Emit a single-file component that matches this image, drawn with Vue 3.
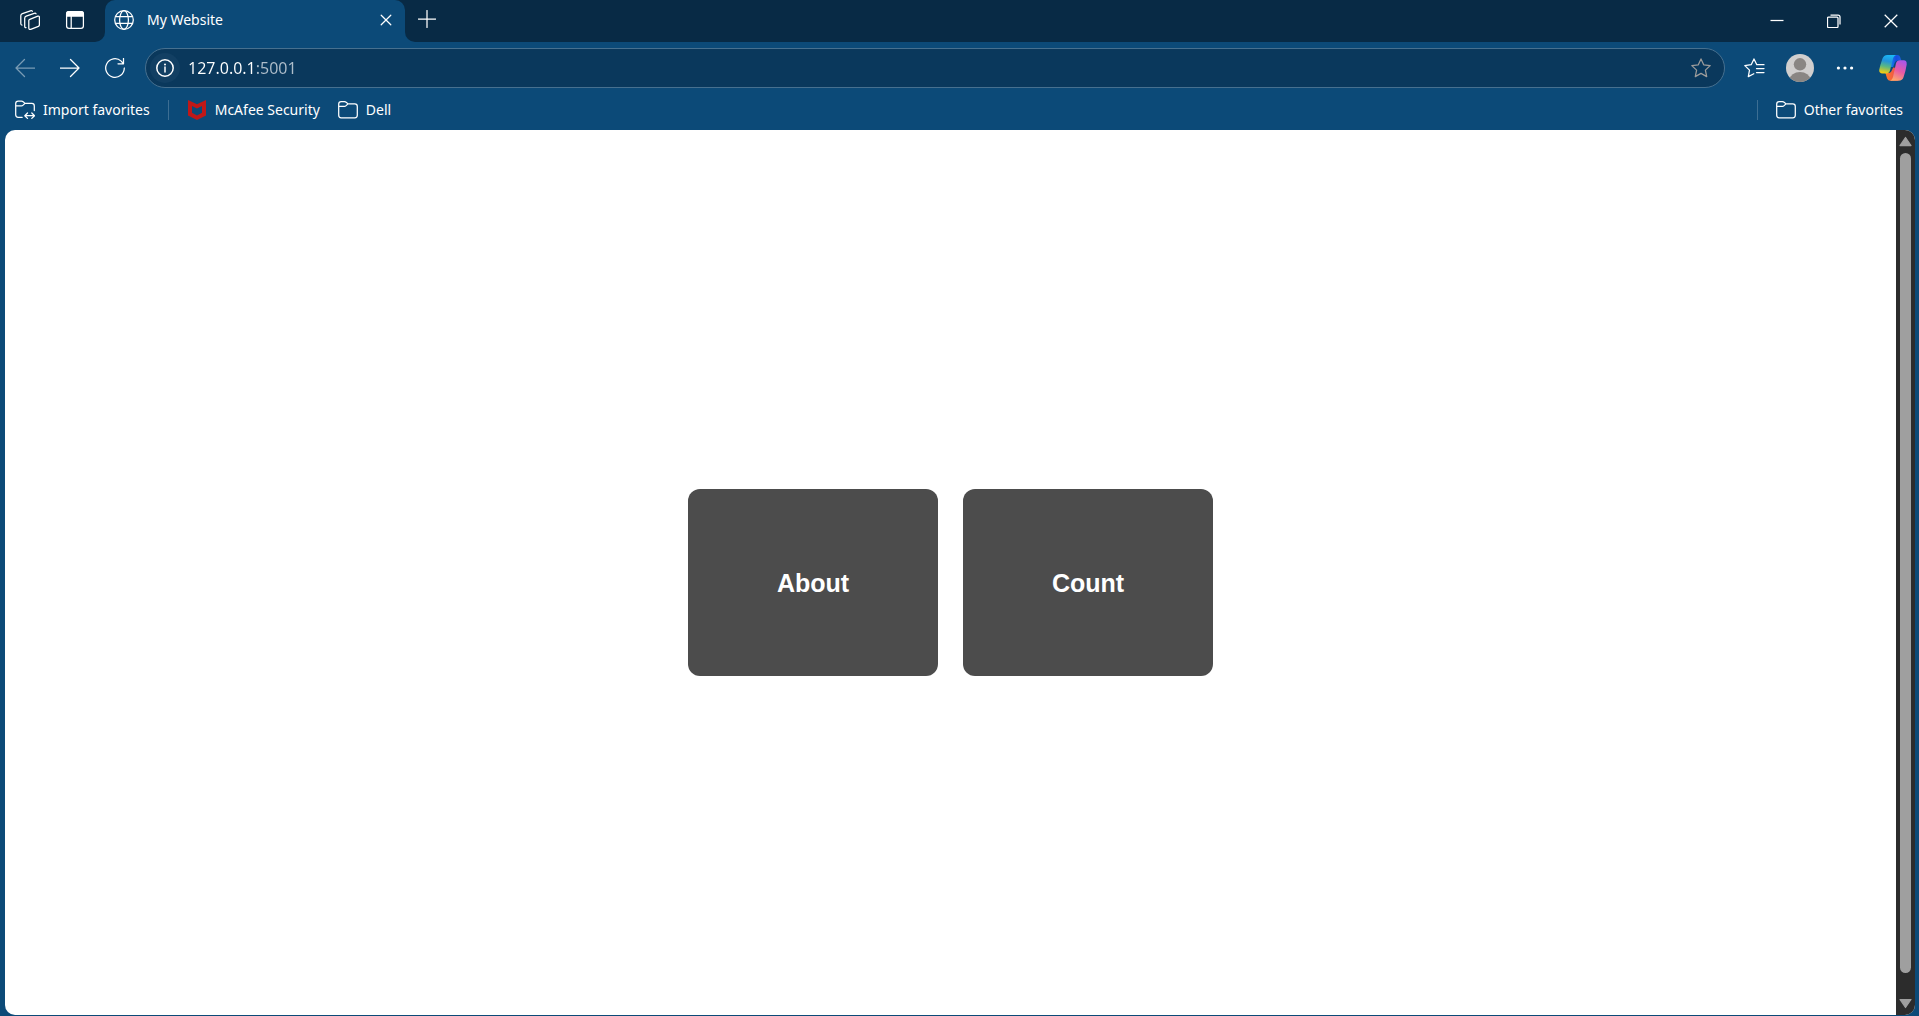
<script setup>
import { ref } from 'vue'

const address = ref('127.0.0.1:5001')
const cards = ['About', 'Count']
</script>

<template>
  <div class="browser">
    <header class="strip">
      <div class="strip-left">
        <button class="tool" aria-label="Workspaces">
          <svg width="20" height="20" viewBox="0 0 20 20">
            <path d="M9.8 9.3 17.8 6.2Q19.4 5.8 19.4 7.2V14.8Q19.4 15.9 18.4 16.4L10.7 19.3Q8.8 19.8 8.8 18V10.6Q8.8 9.7 9.8 9.3Z" />
            <path d="M16 3.8Q15.6 2.8 14.2 3.3L6.2 6.2Q4.7 6.8 4.7 8.3V16.2Q4.7 17.7 6 17.6" />
            <path d="M12.4 1.3Q11.8.3 10.4.8L2.4 3.7Q.8 4.3.8 5.8V13.6Q.8 15.1 2 15.1" />
          </svg>
        </button>
        <button class="tool" aria-label="Tab actions">
          <svg width="20" height="20" viewBox="0 0 20 20">
            <rect x="1.6" y="1.6" width="16.8" height="16.8" rx="2.4" />
            <path d="M1.6 6V4Q1.6 1.6 4 1.6H16Q18.4 1.6 18.4 4V6Z" fill="#fff" />
            <path d="M6.2 6V18" />
          </svg>
        </button>
      </div>
      <div class="tab-slot">
        <div class="tab">
          <svg width="20" height="20" viewBox="0 0 20 20">
            <circle cx="10" cy="10" r="9.3" />
            <ellipse cx="10" cy="10" rx="4.4" ry="9.3" />
            <path d="M1.6 6.7H18.4M1.6 13.3H18.4" />
          </svg>
          <span class="tab-title">My Website</span>
          <button class="tab-close" aria-label="Close tab">
            <svg width="12" height="12" viewBox="0 0 12 12"><path d="M1.2 1.2 10.8 10.8M10.8 1.2 1.2 10.8" /></svg>
          </button>
        </div>
      </div>
      <div class="strip-right">
        <button class="new-tab" aria-label="New tab">
          <svg width="18" height="18" viewBox="0 0 18 18"><path d="M9 .5V17.5M.5 9H17.5" /></svg>
        </button>
        <div class="window-controls">
          <button aria-label="Minimize">
            <svg width="14" height="14" viewBox="0 0 14 14"><path d="M.5 6.5H13.5" /></svg>
          </button>
          <button aria-label="Restore">
            <svg width="14" height="14" viewBox="0 0 14 14">
              <rect x=".5" y="3" width="10.5" height="10.5" rx="1" />
              <path d="M3.5 1H11Q13 1 13 3V10.5" />
            </svg>
          </button>
          <button aria-label="Close">
            <svg width="14" height="14" viewBox="0 0 14 14"><path d="M.7.7 13.3 13.3M13.3.7.7 13.3" /></svg>
          </button>
        </div>
      </div>
    </header>

    <nav class="toolbar">
      <button class="tool dim" aria-label="Back">
        <svg width="20" height="20" viewBox="0 0 20 20"><path d="M20 10H1M9.5 1.5 1 10 9.5 18.5" /></svg>
      </button>
      <button class="tool" aria-label="Forward">
        <svg width="20" height="20" viewBox="0 0 20 20"><path d="M0 10H19M10.5 1.5 19 10 10.5 18.5" /></svg>
      </button>
      <button class="tool" aria-label="Refresh">
        <svg width="20" height="20" viewBox="0 0 20 20"><path d="M19.3 10A9.3 9.3 0 1 1 16.2 3.1L18.3 5.6M18.5.4V5.8H13" /></svg>
      </button>
      <div class="address">
        <button class="info" aria-label="View site information">
          <svg width="18" height="18" viewBox="0 0 18 18">
            <circle cx="9" cy="9" r="8.2" stroke-width="1.5" />
            <path d="M9 8V13" stroke-width="1.5" />
            <circle cx="9" cy="5.5" r="1" fill="#fff" stroke="none" />
          </svg>
        </button>
        <input v-model="address" class="url" type="text" aria-label="Address" spellcheck="false" />
        <button class="star" aria-label="Add to favorites">
          <svg width="20" height="20" viewBox="0 0 20 20">
            <path d="M10 .9 12.7 6.8 19.2 7.6 14.4 12.1 15.7 18.6 10 15.4 4.3 18.6 5.6 12.1.8 7.6 7.3 6.8Z" />
          </svg>
        </button>
      </div>
      <button class="tool" aria-label="Favorites">
        <svg width="21" height="20" viewBox="0 0 21 20">
          <path d="M20 6.7H12.8L10 .9 7.2 6.7.8 7.6 5.5 12.1 4.3 18.6 9.8 15.7M12.5 10.5H20M12.5 14.5H20" />
        </svg>
      </button>
      <button class="tool" aria-label="Profile">
        <svg width="28" height="28" viewBox="0 0 28 28">
          <defs><clipPath id="avatar"><circle cx="14" cy="14" r="14" /></clipPath></defs>
          <g clip-path="url(#avatar)" stroke="none">
            <rect width="28" height="28" fill="#d1cfce" />
            <circle cx="14" cy="10.3" r="6.2" fill="#8a8683" />
            <ellipse cx="14" cy="25.3" rx="10.2" ry="7.3" fill="#8a8683" />
          </g>
        </svg>
      </button>
      <button class="tool" aria-label="Settings and more">
        <svg width="18" height="18" viewBox="0 0 18 18">
          <g fill="#fff" stroke="none"><circle cx="2.4" cy="9" r="1.6" /><circle cx="9" cy="9" r="1.6" /><circle cx="15.6" cy="9" r="1.6" /></g>
        </svg>
      </button>
      <button class="tool copilot" aria-label="Copilot">
        <svg width="28" height="28" viewBox="0 0 28 28">
          <defs>
            <linearGradient id="cool" x1=".6" y1="0" x2=".4" y2="1">
              <stop offset="0" stop-color="#19b9f5" /><stop offset=".35" stop-color="#2393db" />
              <stop offset=".65" stop-color="#5bb882" /><stop offset="1" stop-color="#f3cc12" />
            </linearGradient>
            <linearGradient id="warm" x1=".7" y1="0" x2=".3" y2="1">
              <stop offset="0" stop-color="#a957e8" /><stop offset=".5" stop-color="#e85aa5" />
              <stop offset="1" stop-color="#ffab68" />
            </linearGradient>
            <linearGradient id="blue"><stop offset="0" stop-color="#12a2ef" /><stop offset=".6" stop-color="#164be0" /><stop offset="1" stop-color="#1d62df" /></linearGradient>
            <linearGradient id="flame"><stop offset="0" stop-color="#ff7b27" /><stop offset="1" stop-color="#e94b51" /></linearGradient>
          </defs>
          <g stroke="none">
            <path d="M9 1H18.6Q20.4 1 21.1 2.9L22.4 6.4H19.4Q16.4 6.4 15.4 9.4L14.2 13H10Z" fill="url(#blue)" />
            <path d="M6.4 19H9.4Q12 19 13 16L14.2 13.5 17 14 19 26.7H11.4Q9 26.7 8.1 24.4Z" fill="url(#flame)" />
            <path d="M18 1H8.4Q4.6 1 3.4 4.8Q1.2 11 .3 15.6Q-.3 19.4 3.4 19.4H7Q10.2 19.4 11 16.4L14 4.6Q15 1 18 1Z" fill="url(#cool)" />
            <path d="M10 26.7H19.6Q23.4 26.7 24.6 22.9Q26.8 16.5 27.7 10.4Q28 6.2 24.6 6.2H21Q17.8 6.2 17 9.2L14 23.1Q13 26.7 10 26.7Z" fill="url(#warm)" />
          </g>
        </svg>
      </button>
    </nav>

    <nav class="favorites" aria-label="Favorites bar">
      <a href="#">
        <svg width="20" height="20" viewBox="0 0 20 20">
          <path d="M7.2 17.3H3.2Q.7 17.3.7 14.8V3.5Q.7 1 3.2 1H6.5Q7.5 1 8.2 1.8L10 3.4H16.8Q19.3 3.4 19.3 5.9V10.5M.7 5.8H6.4Q7.4 5.8 8.1 5.1L10 3.4M10.2 15.7H19.3M12.5 13 9.8 15.7 12.5 18.4M16.8 13 19.5 15.7 16.8 18.4" />
        </svg>
        Import favorites
      </a>
      <span class="divider"></span>
      <a href="#">
        <svg width="20" height="20" viewBox="0 0 20 20">
          <path d="M1 0 10 4.2 19 0V15.4L10 20 1 15.4ZM5 6V12.8L10 15.4 15 12.8V6L10 8.4Z" fill="#c01818" fill-rule="evenodd" stroke="none" />
        </svg>
        McAfee Security
      </a>
      <a href="#">
        <svg width="20" height="20" viewBox="0 0 20 20">
          <path d="M.7 4Q.7 1.5 3.2 1.5H6.5Q7.5 1.5 8.2 2.3L10 3.9H16.8Q19.3 3.9 19.3 6.4V15.3Q19.3 17.8 16.8 17.8H3.2Q.7 17.8.7 15.3ZM.7 6.3H6.4Q7.4 6.3 8.1 5.6L10 3.9" />
        </svg>
        Dell
      </a>
      <div class="other">
        <span class="divider"></span>
        <a href="#">
          <svg width="20" height="20" viewBox="0 0 20 20">
            <path d="M.7 4Q.7 1.5 3.2 1.5H6.5Q7.5 1.5 8.2 2.3L10 3.9H16.8Q19.3 3.9 19.3 6.4V15.3Q19.3 17.8 16.8 17.8H3.2Q.7 17.8.7 15.3ZM.7 6.3H6.4Q7.4 6.3 8.1 5.6L10 3.9" />
          </svg>
          Other favorites
        </a>
      </div>
    </nav>

    <div class="viewport">
      <main class="page">
        <a v-for="card in cards" :key="card" class="card" href="#">{{ card }}</a>
      </main>
      <div class="scrollbar">
        <button aria-label="Scroll up">
          <svg width="13" height="11" viewBox="0 0 13 11"><path d="M6.5 1.5 12 9.5H1Z" /></svg>
        </button>
        <div class="thumb"></div>
        <button aria-label="Scroll down">
          <svg width="13" height="11" viewBox="0 0 13 11"><path d="M6.5 9.5 12 1.5H1Z" /></svg>
        </button>
      </div>
    </div>
  </div>
</template>

<style>
body {
  margin: 0;
  background: #0c4a78;
}
</style>

<style scoped>
.browser {
  display: flex;
  flex-direction: column;
  min-height: 100vh;
  background: #0c4a78;
  color: #fff;
  font: 14px/20px "Noto Sans", "Open Sans", sans-serif;
}
svg {
  display: block;
  flex: none;
  fill: none;
  stroke: #fff;
  stroke-width: 1.25;
  stroke-linecap: round;
  stroke-linejoin: round;
}
button {
  display: flex;
  align-items: center;
  justify-content: center;
  flex: none;
  padding: 0;
  border: 0;
  background: none;
}
a {
  color: inherit;
  text-decoration: none;
}
.tool {
  width: 45px;
  height: 40px;
}
.new-tab {
  width: 44px;
  height: 38px;
}
.strip {
  display: flex;
  height: 42px;
}
.strip-left,
.strip-right {
  display: flex;
  box-sizing: border-box;
  background: #082a45;
}
.strip-left {
  width: 105px;
  padding-left: 7px;
  border-bottom-right-radius: 10px;
}
.strip-right {
  flex: 1;
  justify-content: space-between;
  border-bottom-left-radius: 10px;
}
.tab-slot {
  width: 300px;
  background: #082a45;
}
.tab {
  display: flex;
  align-items: center;
  box-sizing: border-box;
  height: 100%;
  padding: 0 7px 2px 9px;
  border-radius: 10px 10px 0 0;
  background: #0c4a78;
}
.tab-title {
  flex: 1;
  margin-left: 13px;
}
.tab-close {
  width: 24px;
  height: 24px;
}
.window-controls {
  display: flex;
}
.window-controls button {
  width: 57px;
}
.window-controls svg {
  stroke-linecap: butt;
}
.toolbar {
  display: flex;
  align-items: center;
  height: 52px;
  padding: 0 1px 0 2px;
}
.dim {
  opacity: 0.45;
}
.address {
  display: flex;
  align-items: center;
  flex: 1;
  box-sizing: border-box;
  height: 40px;
  margin: 0 7px 0 8px;
  padding: 0 13px 0 4px;
  border: 1px solid #47708f;
  border-radius: 20px;
  background: #0a385c;
}
.info {
  width: 30px;
  height: 30px;
  border-radius: 50%;
  background: #123f63;
}
.url {
  flex: 1;
  min-width: 0;
  height: 24px;
  margin-left: 8px;
  padding: 0;
  border: 0;
  outline: 0;
  background: linear-gradient(90deg, #fff 68px, #aebdca 68px);
  -webkit-background-clip: text;
  background-clip: text;
  color: #fff;
  -webkit-text-fill-color: transparent;
  font: 16px/24px "Noto Sans", "Open Sans", sans-serif;
}
.star svg {
  stroke: #9d9c9b;
}
.copilot {
  width: 51px;
}
.favorites {
  display: flex;
  align-items: center;
  gap: 18px;
  height: 32px;
  padding: 0 16px 4px 15px;
}
.favorites a {
  display: flex;
  align-items: center;
  gap: 8px;
}
.divider {
  width: 1px;
  height: 20px;
  background: #3d6e93;
}
.other {
  display: flex;
  align-items: center;
  gap: 18px;
  margin-left: auto;
}
.viewport {
  display: flex;
  flex: 1;
  overflow: hidden;
  margin: 0 4px 1px 5px;
  border-radius: 10px;
  background: #fff;
}
.page {
  display: flex;
  align-items: center;
  justify-content: center;
  flex: 1;
  gap: 25px;
  padding-top: 20px;
}
.card {
  display: flex;
  align-items: center;
  justify-content: center;
  width: 250px;
  height: 187px;
  border-radius: 12px;
  background: #4c4c4c;
  font: bold 25px/28px "Liberation Sans", Arial, sans-serif;
}
.scrollbar {
  display: flex;
  flex-direction: column;
  align-items: center;
  width: 19px;
  background: #2c2c2c;
}
.scrollbar button {
  width: 19px;
  height: 23px;
}
.scrollbar svg {
  fill: #9f9f9f;
  stroke: #9f9f9f;
}
.thumb {
  flex: 1;
  width: 11px;
  margin-bottom: 19px;
  border-radius: 6px;
  background: #9f9f9f;
}
</style>
